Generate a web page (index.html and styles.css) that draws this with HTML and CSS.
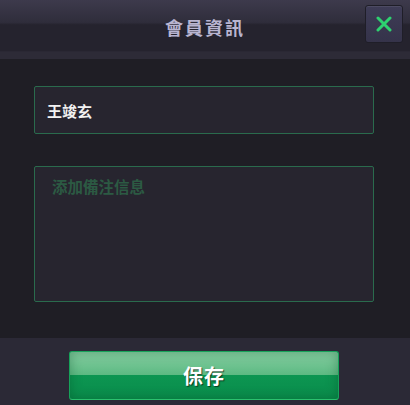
FILE: index.html
```html
<!DOCTYPE html>
<html lang="zh-Hant">
<head>
    <meta charset="UTF-8">
    <meta name="viewport" content="width=device-width, initial-scale=1.0">
    <title>會員資訊</title>
    <link rel="stylesheet" href="styles.css">
</head>
<body>
    <div class="dialog">
        <header class="dialog-header">
            <h1 class="dialog-title">會員資訊</h1>
            <button class="close-btn" aria-label="關閉">
                <svg width="16" height="16" viewBox="0 0 16 16">
                    <path d="M2 2 L14 14 M14 2 L2 14" stroke="#2ed170" stroke-width="3" stroke-linecap="round" fill="none"/>
                </svg>
            </button>
        </header>

        <main class="dialog-body">
            <div class="field">王竣玄</div>
            <div class="field field-note">
                <span class="placeholder">添加備注信息</span>
            </div>
        </main>

        <footer class="dialog-footer">
            <button class="save-btn">保存</button>
        </footer>
    </div>
</body>
</html>
```

FILE: styles.css
```css
/* Base */
* {
    margin: 0;
    padding: 0;
    box-sizing: border-box;
    font-family: 'Noto Sans CJK TC', 'Noto Sans CJK SC', sans-serif;
}

body {
    background: #2a2835;
    width: 410px;
    height: 405px;
    overflow: hidden;
}

.dialog {
    display: flex;
    flex-direction: column;
    height: 405px;
}

/* Header */
.dialog-header {
    height: 59px;
    position: relative;
    display: flex;
    align-items: center;
    justify-content: center;
    background: linear-gradient(180deg, #3d3a4c 0%, #2f2d3b 38%, #25232e 42%, #25232e 86%, #2d2b37 88%, #2d2b37 100%);
}

.dialog-title {
    font-size: 18px;
    font-weight: 700;
    color: #b9b5d1;
    letter-spacing: 2px;
    margin-top: -5px;
}

.close-btn {
    position: absolute;
    top: 5px;
    right: 7px;
    width: 38px;
    height: 38px;
    border: 1px solid #1f1e28;
    border-radius: 3px;
    background: linear-gradient(180deg, #3e3c56, #35334a);
    box-shadow: inset 0 1px 0 rgba(255,255,255,0.08);
    display: flex;
    align-items: center;
    justify-content: center;
}

/* Body */
.dialog-body {
    height: 279px;
    background: #1f1e25;
    padding: 27px 36px 0 34px;
    display: flex;
    flex-direction: column;
    gap: 32px;
}

.field {
    height: 48px;
    border: 1px solid #2a6b4d;
    border-radius: 2px;
    background: #27252f;
    color: #f2f2f2;
    font-size: 15px;
    font-weight: 700;
    padding: 0 0 0 12px;
    display: flex;
    align-items: center;
}

.field-note {
    height: 136px;
    align-items: flex-start;
    padding: 8px 0 0 17px;
}

.placeholder {
    color: #2c5a43;
    font-size: 15.5px;
}

/* Footer */
.dialog-footer {
    flex: 1;
    background: #2b2936;
    display: flex;
    justify-content: center;
    padding-top: 13px;
    padding-right: 2px;
}

.save-btn {
    width: 270px;
    height: 49px;
    border: 1px solid #17a25a;
    border-bottom-color: #2bc16e;
    border-radius: 3px;
    background: linear-gradient(180deg, #86cfa2 0%, #5cb982 49%, #0c9551 50%, #0a8d4c 100%);
    box-shadow: inset 0 0 12px rgba(0,60,30,0.35);
    color: #ffffff;
    font-size: 20px;
    font-weight: 700;
    text-shadow: 1px 1px 1px rgba(0,0,0,0.6);
    letter-spacing: 1px;
}
```
